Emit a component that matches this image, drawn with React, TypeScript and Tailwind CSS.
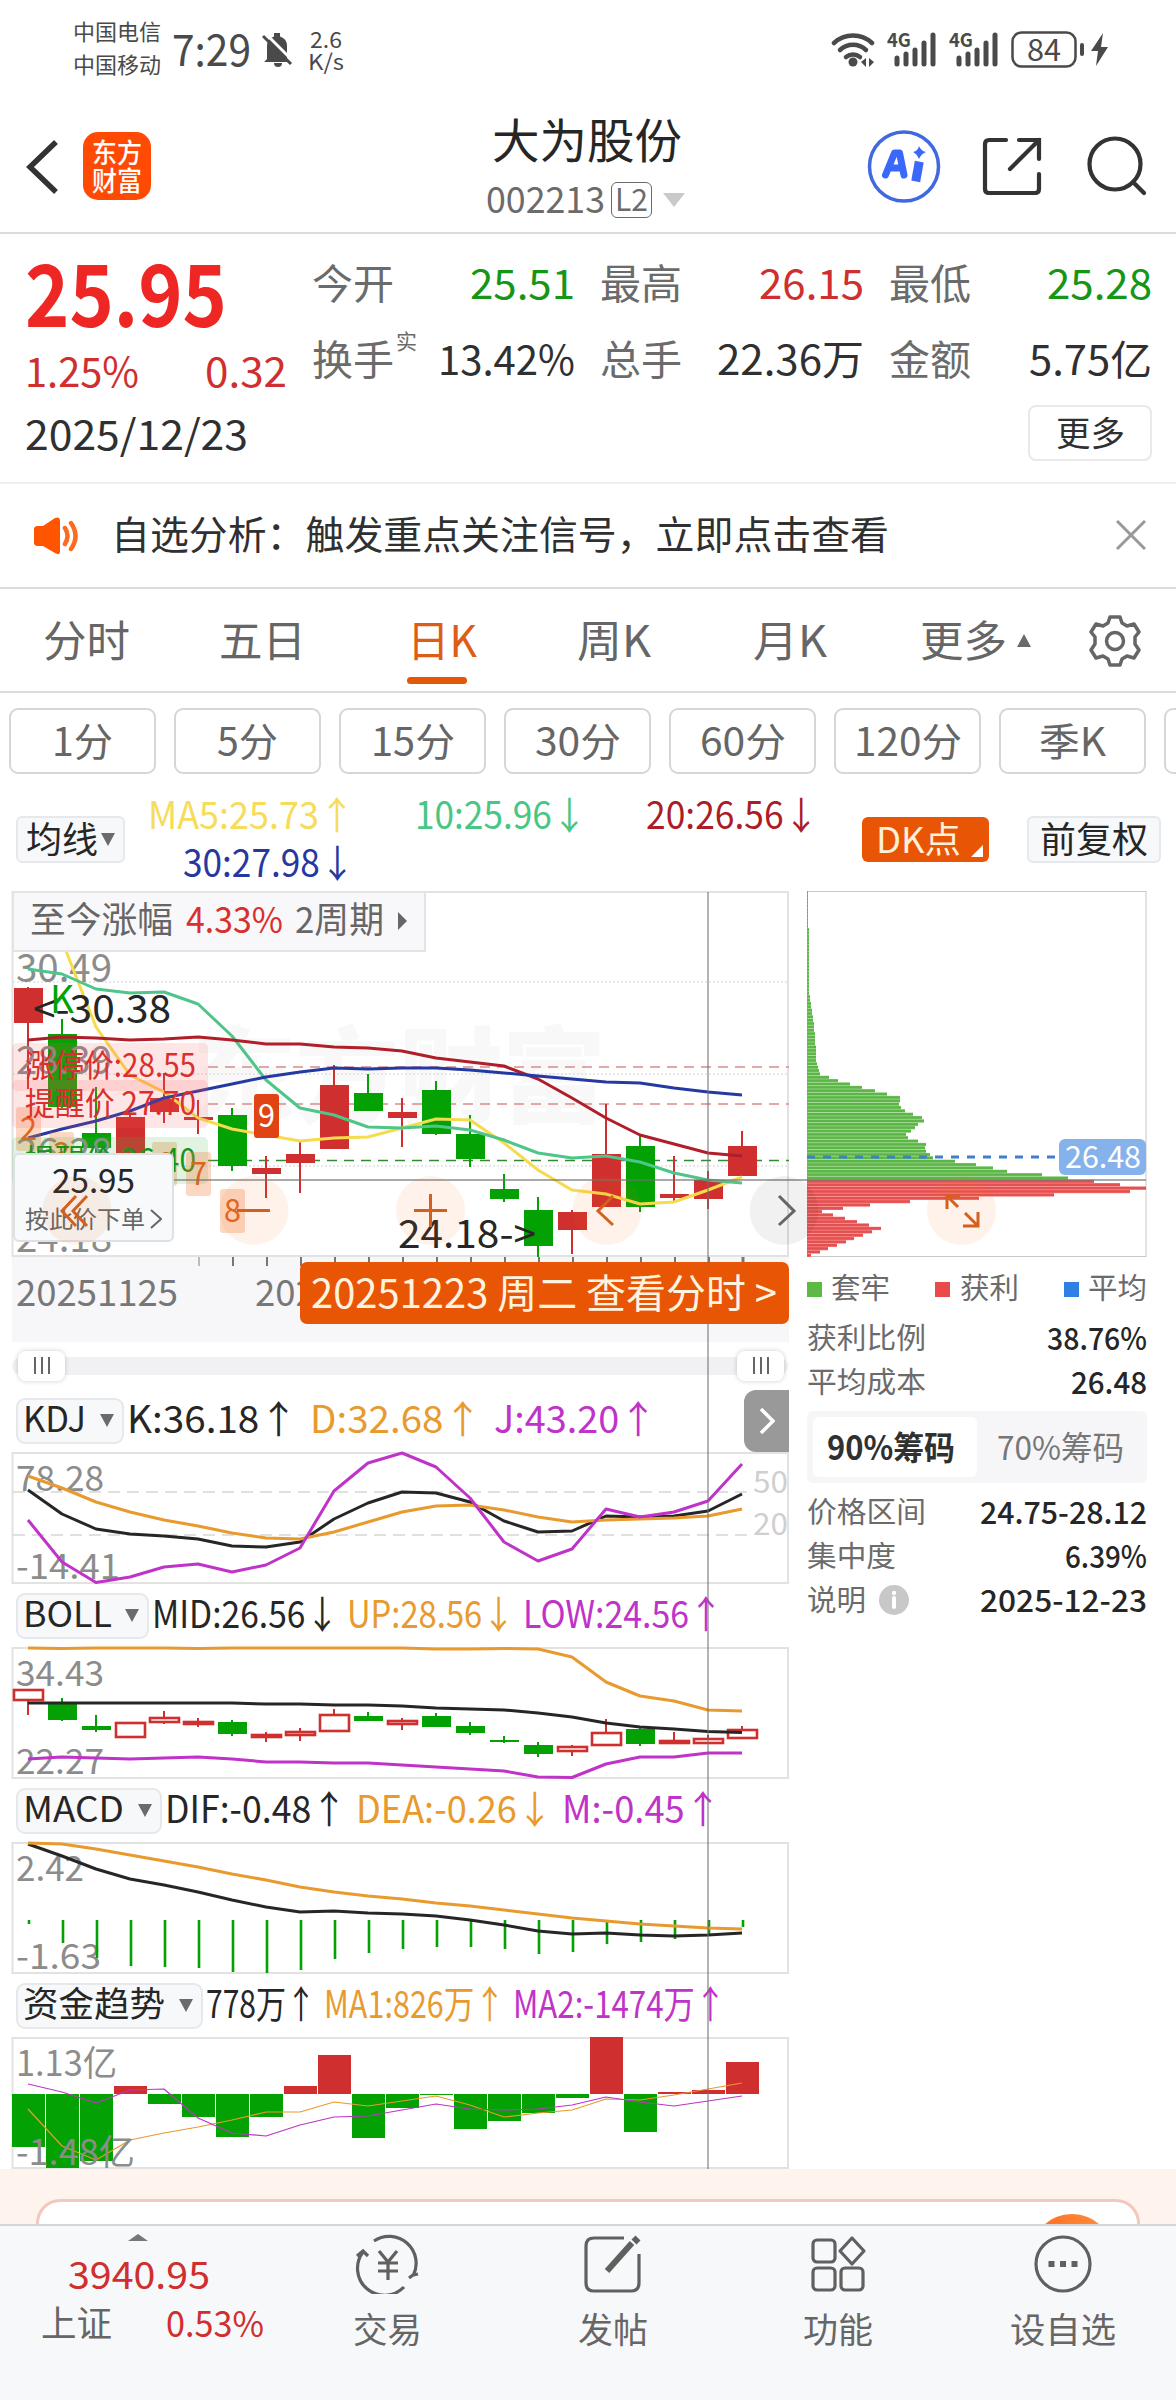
import { ReactNode } from 'react'

const RED = '#cf2f2e'
const GREEN = '#03a103'
const ORANGE = '#e89a2e'
const PURPLE = '#c033c8'
const BLACK = '#262626'

// every candle sits on a 34px pitch
const cx = (i: number) => 28 + 34 * i

const toPoints = (ys: number[], from = 0) => ys.map((y, i) => `${cx(i + from)},${y}`).join(' ')

// open/close/high/low already in chart pixels: [up, bodyTop, bodyBottom, wickTop, wickBottom]
type Candle = [number, number, number, number, number]

const candles: Candle[] = [
    [1, 97, 132, 96, 198], [0, 143, 216, 128, 217], [0, 242, 257, 196, 270], [1, 226, 266, 222, 268],
    [1, 207, 221, 182, 232], [1, 226, 229, 209, 243], [0, 224, 275, 217, 280], [1, 277, 283, 265, 307],
    [1, 263, 272, 251, 302], [1, 194, 258, 174, 258], [0, 202, 220, 183, 220], [1, 221, 227, 207, 256],
    [0, 199, 243, 190, 244], [0, 243, 268, 224, 276], [0, 298, 308, 283, 311], [0, 319, 355, 306, 366],
    [1, 321, 339, 319, 363], [1, 263, 316, 213, 316], [0, 255, 316, 245, 321], [1, 303, 307, 265, 310],
    [1, 289, 308, 280, 318], [1, 255, 285, 240, 285],
]

const ma10 = [78, 83, 98, 102, 101, 113, 145, 189, 217, 224, 236, 237, 235, 239, 249, 262, 267, 265, 271, 282, 289, 292]
const ma20 = [149, 146, 147, 149, 148, 146, 149, 153, 153, 156, 157, 160, 167, 171, 175, 188, 207, 227, 244, 253, 262, 265]
const ma30 = [247, 238, 230, 220, 207, 200, 193, 186, 181, 177, 178, 177, 177, 179, 182, 185, 188, 191, 192, 197, 201, 204]
const ma5 = [136, 184, 201, 227, 238, 244, 250, 247, 246, 237, 228, 229, 252, 279, 299, 303, 313, 311, 299, 286]

const kLine = [38, 62, 77, 82, 84, 87, 94, 95, 90, 67, 51, 40, 41, 50, 69, 80, 79, 64, 65, 64, 59, 42]
const dLine = [24, 36, 50, 60, 68, 74, 81, 86, 87, 80, 70, 60, 54, 53, 58, 65, 70, 68, 67, 66, 64, 57]
const jLine = [68, 110, 130.5, 125, 115, 112, 120, 113, 96, 39, 11, 1, 15, 46, 90, 109, 97, 57, 65, 60, 49, 12]

const bollUp = [1, 1.5, 1, 1, 1, 1.5, 1, 1, 1, 1, 1, 1, 2, 2, 1.5, 2, 10, 35, 49, 54, 63, 64]
const bollMid = [56, 56, 56, 56, 56, 56, 56, 57, 57, 58, 58, 59, 61, 62, 63, 66, 70, 76, 80, 82, 84.5, 85.5]
const bollLow = [112, 110, 111, 112, 111, 110, 112, 115, 115, 116, 116, 118, 120, 122, 124, 130, 130.5, 117, 110, 110, 106, 106]
const bollCandles: Candle[] = [
    [1, 42, 53, 42, 68], [0, 55, 73, 51, 74], [0, 79, 83, 68, 85], [1, 75, 90, 75, 90],
    [1, 70, 75, 64, 77], [1, 74, 77, 71, 80], [0, 75, 87, 73, 89], [1, 87, 90, 85, 95],
    [1, 84, 88, 81, 94], [1, 67, 84, 62, 84], [0, 69, 74, 65, 74], [1, 73, 77, 71, 83],
    [0, 69, 80, 66, 80], [0, 79, 86, 75, 88], [0, 93, 95, 89, 96], [0, 98, 107, 95, 110],
    [1, 99, 104, 98, 109], [1, 85, 98, 72, 98], [0, 82, 97, 80, 99], [1, 93, 96, 85, 96],
    [1, 91, 96, 88, 97], [1, 82, 91, 79, 91],
]

const dif = [2, 14, 27, 37, 43, 50, 58, 65, 70, 69, 71, 72, 74, 78, 83, 89, 92, 91, 93, 94, 93, 91]
const dea = [1, 2, 7, 13, 19, 25, 32, 38, 45, 50, 54, 57, 61, 64, 68, 72, 76, 79, 82, 84, 86, 87]
const macdBars = [82, 101, 116, 124, 125, 126, 130, 131, 128, 117, 111, 107, 105, 105, 107, 112, 110, 102, 100, 97, 93, 85]

const fundBars = [53, 74, 67, -8, 10, 23, 43, 23, -8, -39, 44, 14, 1, 35, 27, 19, 4, -57, 38, -2, -4, -32]
const fundMa1 = [72, 109, 123, 103, 96, 90, 83, 75, 75, 65, 69, 64, 59, 68, 80, 76, 73, 62, 63, 58, 52, 46]
const fundMa2 = [47, 55, 66, 53, 52, 81, 96, 99, 88, 80, 79, 73, 67, 72, 73, 72, 68, 60, 65, 69, 64, 59]

const lockedChips = [
    1, 1, 1, 1, 1, 1, 1, 1, 1, 1, 1, 2, 2, 2, 2, 2, 2, 2, 2, 2, 2, 2, 2, 2, 2, 2, 2, 2, 2, 2, 2,
    3, 3, 4, 4, 5, 5, 6, 6, 7, 7, 7, 8, 8, 8, 8, 9, 9, 9, 9, 9, 10, 11, 12, 13,
    22, 31, 43, 55, 68, 80, 93, 93, 92, 94, 98, 106, 115, 117, 111, 108, 104, 99, 101, 111, 119, 118, 119,
    123, 126, 148, 169, 186, 200, 235, 261,
]
const profitChips = [287, 313, 339, 323, 247, 172, 103, 63, 36, 15, 26, 38, 50, 62, 74, 65, 56, 47, 39, 30, 21, 13, 4]

function Candles({ data, hollow }: { data: Candle[]; hollow?: boolean }) {
    return (
        <g>
            {data.map(([up, top, bottom, high, low], i) => {
                const color = up ? RED : GREEN
                return (
                    <g key={i}>
                        <path d={`M${cx(i)} ${high}V${top}M${cx(i)} ${bottom}V${low}`} stroke={color} strokeWidth="2" />
                        {hollow && up
                            ? <rect x={cx(i) - 14} y={top + 1} width="29" height={Math.max(bottom - top - 1, 1)} fill="white" stroke={color} strokeWidth="2.6" />
                            : <rect x={cx(i) - 14} y={top} width="29" height={Math.max(bottom - top, 1)} fill={color} />}
                    </g>
                )
            })}
        </g>
    )
}

function Line({ ys, color, width = 3, from }: { ys: number[]; color: string; width?: number; from?: number }) {
    return <polyline points={toPoints(ys, from)} fill="none" stroke={color} strokeWidth={width} strokeLinejoin="round" />
}

function Label({ x, y, w, size = 37, color = '#8c8c8c', children }: { x: number; y: number; w: number; size?: number; color?: string; children: string }) {
    return <text x={x} y={y} fontSize={size} fill={color} textLength={w} lengthAdjust="spacingAndGlyphs">{children}</text>
}

// one-line run of text squeezed or stretched to a fixed width
function Fit({ w, size, color = 'currentColor', weight, className = '', children }: { w: number; size: number; color?: string; weight?: number; className?: string; children: string }) {
    return (
        <svg width={w} height={size} className={`shrink-0 overflow-visible ${className}`}>
            <text y={size * 0.87} fontSize={size} fill={color} fontWeight={weight} textLength={w} lengthAdjust="spacingAndGlyphs">{children}</text>
        </svg>
    )
}

function Caret({ up }: { up?: boolean }) {
    return (
        <svg width="14" height="13" viewBox="0 0 14 13" className="shrink-0">
            <path d={up ? 'M7 0L14 13H0Z' : 'M0 0H14L7 13Z'} fill="#6b6b6b" />
        </svg>
    )
}

function Signal() {
    return (
        <svg width="50" height="38" viewBox="0 0 50 38" className="overflow-visible">
            <text x="0" y="16" fontSize="19" fontWeight="700" textLength="24" lengthAdjust="spacingAndGlyphs" fill="#4a4a4a">4G</text>
            <path d="M10 27V33M19 23V33M28 19V33M37 12V33M46 4V33" stroke="#4a4a4a" strokeWidth="5" strokeLinecap="round" />
        </svg>
    )
}

function StatusBar() {
    return (
        <div className="flex h-[98px] justify-between pl-[73px] pr-[67px] text-[#4a4a4a]">
            <div className="flex">
                <div className="flex flex-col gap-[11px] pt-[21px]">
                    <Fit w={88} size={22}>中国电信</Fit>
                    <Fit w={88} size={22}>中国移动</Fit>
                </div>
                <Fit w={79} size={43} className="ml-[11px] mt-[29px]">7:29</Fit>
                <svg width="32" height="36" viewBox="0 0 32 36" className="ml-[11px] mt-[32px]">
                    <path d="M5 27V14a10 10 0 0 1 7-9.500V1h6v3.500a10 10 0 0 1 7 9.500V27l3 3H2Z" fill="#4a4a4a" />
                    <path d="M12 31h8a4 4 0 0 1-8 0Z" fill="#4a4a4a" />
                    <path d="M2 0L32 30" stroke="white" strokeWidth="3" />
                    <path d="M1 4L29 32" stroke="#4a4a4a" strokeWidth="3" />
                </svg>
                <div className="ml-[14px] flex flex-col items-center pt-[29px]">
                    <Fit w={32} size={22}>2.6</Fit>
                    <Fit w={36} size={22}>K/s</Fit>
                </div>
            </div>
            <div className="flex pt-[31px]">
                <svg width="46" height="38" viewBox="0 0 46 38" className="mr-[10px]">
                    <g fill="none" stroke="#4a4a4a" strokeWidth="4.500" strokeLinecap="round">
                        <path d="M3 12a28 28 0 0 1 38 0" />
                        <path d="M9 19a19 19 0 0 1 26 0" />
                        <path d="M15 26a11 11 0 0 1 14 0" />
                    </g>
                    <circle cx="22" cy="31" r="4.500" fill="#4a4a4a" />
                    <path d="M30 31L35 27V36ZM43 31L38 27V36Z" fill="#4a4a4a" />
                </svg>
                <div className="flex gap-[12px]">
                    <Signal />
                    <Signal />
                </div>
                <svg width="98" height="38" viewBox="0 0 98 38" className="ml-[12px] overflow-visible">
                    <rect x="1.500" y="1.500" width="63" height="34" rx="9" fill="none" stroke="#4a4a4a" strokeWidth="2.500" />
                    <text x="16" y="30" fontSize="31" textLength="34" lengthAdjust="spacingAndGlyphs" fill="#4a4a4a">84</text>
                    <path d="M71 14V23" stroke="#4a4a4a" strokeWidth="4" strokeLinecap="round" />
                    <path d="M92 2L80 20H87L85 35L97 16H90Z" fill="#4a4a4a" />
                </svg>
            </div>
        </div>
    )
}

function Header() {
    return (
        <header className="flex h-[136px] border-b-2 border-[#dcdcdc] pl-[26px] pr-[28px]">
            <div className="flex w-[462px]">
                <svg width="34" height="56" viewBox="0 0 34 56" className="mt-[41px]">
                    <path d="M30 3L4 28L30 53" fill="none" stroke="#333" strokeWidth="5.500" />
                </svg>
                <div className="ml-[23px] mt-[34px] flex h-[68px] w-[68px] flex-col items-center justify-center gap-px rounded-[15px] bg-[#ff4a05] text-white">
                    <Fit w={50} size={27} weight={500}>东方</Fit>
                    <Fit w={50} size={27} weight={500}>财富</Fit>
                </div>
            </div>
            <div className="flex w-[200px] flex-col pt-[19px] text-[#262626]">
                <Fit w={190} size={47} className="ml-[4px]">大为股份</Fit>
                <div className="-ml-[2px] mt-[17px] flex items-center text-[#6b6b6b]">
                    <Fit w={119} size={37}>002213</Fit>
                    <span className="ml-[6px] flex h-[36px] w-[41px] items-center justify-center rounded-md border-[1.5px] border-[#6b6b6b]"><Fit w={33} size={31}>L2</Fit></span>
                    <svg width="22" height="14" viewBox="0 0 22 14" className="ml-[11px]"><path d="M0 0H22L11 14Z" fill="#c9c9c9" /></svg>
                </div>
            </div>
            <div className="ml-auto flex">
                <svg width="74" height="74" viewBox="0 0 74 74" className="mt-[31px]">
                    <circle cx="37" cy="37.500" r="34.500" fill="none" stroke="#4068e0" strokeWidth="3.500" />
                    <g fill="none" stroke="#3a68fb" strokeLinejoin="round" strokeLinecap="round">
                        <path d="M18.500 46L27.500 24H32.500L37 46M25 39H35" strokeWidth="7" />
                        <path d="M51.500 37L49.500 48" strokeWidth="9" strokeLinecap="square" />
                    </g>
                    <path d="M52 17Q54 22 59 23Q54 25 52 30Q50 25 46 23Q51 22 52 17Z" fill="#3a68fb" />
                </svg>
                <svg width="60" height="60" viewBox="0 0 60 60" className="ml-[41px] mt-[39px]">
                    <path d="M24 3H7Q3 3 3 7V52Q3 56 7 56H53Q57 56 57 52V37M28 32L57 3M37 3H57V22" fill="none" stroke="#333" strokeWidth="4.200" strokeLinecap="round" />
                </svg>
                <svg width="62" height="62" viewBox="0 0 62 62" className="ml-[44px] mt-[37px]">
                    <circle cx="29" cy="29" r="25.500" fill="none" stroke="#333" strokeWidth="4.200" />
                    <path d="M47 47L58 58" stroke="#333" strokeWidth="4.200" strokeLinecap="round" />
                </svg>
            </div>
        </header>
    )
}

function Stat({ label, sup, value, w, color = '#303030' }: { label: string; sup?: string; value: string; w: number; color?: string }) {
    return (
        <div className="flex items-center justify-between text-[#6b6b6b]">
            <div className="flex">
                <Fit w={82} size={41}>{label}</Fit>
                {sup && <Fit w={21} size={21} className="-mt-[8px] ml-[2px]">{sup}</Fit>}
            </div>
            <Fit w={w} size={41} color={color}>{value}</Fit>
        </div>
    )
}

function Quote() {
    return (
        <section className="h-[250px] border-b-2 border-[#eee] pl-[25px] pr-[24px]">
            <div className="flex h-[166px]">
                <div className="w-[262px] pt-[18px]">
                    <Fit w={202} size={86} color="#ee2624" weight={700}>25.95</Fit>
                    <div className="mt-[13px] flex justify-between">
                        <Fit w={114} size={41} color={RED}>1.25%</Fit>
                        <Fit w={82} size={41} color={RED}>0.32</Fit>
                    </div>
                </div>
                <div className="ml-[25px] grid grow grid-cols-3 grid-rows-[41px_41px] gap-x-[25px] gap-y-[35px] pt-[29px]">
                    <Stat label="今开" value="25.51" w={105} color="#169616" />
                    <Stat label="最高" value="26.15" w={105} color={RED} />
                    <Stat label="最低" value="25.28" w={105} color="#169616" />
                    <Stat label="换手" sup="实" value="13.42%" w={137} />
                    <Stat label="总手" value="22.36万" w={147} />
                    <Stat label="金额" value="5.75亿" w={123} />
                </div>
            </div>
            <div className="flex items-start justify-between text-[#303030]">
                <Fit w={223} size={41} className="mt-[14px]">2025/12/23</Fit>
                <button className="mt-[5px] flex h-[56px] w-[124px] items-center justify-center rounded-lg border-2 border-[#e9e9e9]"><Fit w={69} size={34}>更多</Fit></button>
            </div>
        </section>
    )
}

function Notice() {
    return (
        <section className="flex h-[105px] items-center border-b-2 border-[#dcdcdc] pl-[33px] pr-[30px] text-[#303030]">
            <svg width="46" height="38" viewBox="0 0 46 38">
                <path d="M1 12Q1 9 5 9H10L22 1Q27 -1 27 4V34Q27 39 22 36L10 29H5Q1 29 1 26Z" fill="#ff5500" />
                <path d="M32 11Q37 19 32 27M38 6Q47 19 38 32" fill="none" stroke="#ff6a20" strokeWidth="4.500" strokeLinecap="round" />
            </svg>
            <Fit w={778} size={39} className="-mt-[3px] ml-[32px]">自选分析：触发重点关注信号，立即点击查看</Fit>
            <svg width="30" height="30" viewBox="0 0 30 30" className="-mt-[2px] ml-auto"><path d="M1 1L29 29M29 1L1 29" stroke="#999" strokeWidth="3" /></svg>
        </section>
    )
}

function Tabs() {
    return (
        <nav className="flex h-[104px] border-b-2 border-[#dcdcdc] pl-[43px] pr-[35px] pt-[31px] text-[#666]">
            <Fit w={87} size={43}>分时</Fit>
            <Fit w={87} size={43} className="ml-[89px]">五日</Fit>
            <div className="ml-[101px] text-[#dd5c16]">
                <Fit w={70} size={43}>日K</Fit>
                <div className="mt-[14px] h-[7px] w-[60px] rounded-full bg-[#e45608]" />
            </div>
            <Fit w={74} size={43} className="ml-[100px]">周K</Fit>
            <Fit w={74} size={43} className="ml-[102px]">月K</Fit>
            <Fit w={87} size={43} className="ml-[93px]">更多</Fit>
            <div className="ml-[10px] mt-[14px]"><Caret up /></div>
            <svg width="52" height="52" viewBox="0 0 52 52" className="-mt-[5px] ml-auto">
                <path d="M21 2H31L33 8L38 11L45 9L50 17L46 22V29L50 35L45 43L38 41L33 44L31 50H21L19 44L14 41L7 43L2 35L6 29V22L2 17L7 9L14 11L19 8Z" fill="none" stroke="#666" strokeWidth="3.500" strokeLinejoin="round" />
                <circle cx="26" cy="26" r="8.500" fill="none" stroke="#666" strokeWidth="3.500" />
            </svg>
        </nav>
    )
}

function Periods() {
    const periods: [string, number][] = [['1分', 61], ['5分', 61], ['15分', 84], ['30分', 86], ['60分', 86], ['120分', 108], ['季K', 67]]
    return (
        <div className="flex gap-[18px] overflow-hidden pl-[9px] pt-[15px] text-[#666]">
            {periods.map(([name, w]) => (
                <button key={name} className="flex h-[66px] w-[147px] shrink-0 items-center justify-center rounded-[9px] border-2 border-[#d6d6d6]">
                    <Fit w={w} size={39}>{name}</Fit>
                </button>
            ))}
            <div className="h-[66px] w-[147px] shrink-0 rounded-[9px] border-2 border-[#d6d6d6]" />
        </div>
    )
}

function Averages() {
    return (
        <div className="flex h-[117px] pl-[16px]">
            <div className="mt-[42px] flex h-[47px] w-[109px] items-center gap-[3px] rounded-md border-2 border-[#e6e8eb] bg-[#f7f8fa] pl-[8px] text-[#262626]">
                <Fit w={72} size={36}>均线</Fit>
                <Caret />
            </div>
            <div className="-ml-[2px] grid w-[696px] grid-cols-3 grid-rows-[38px_38px] justify-items-end gap-y-[10px] pt-[22px]">
                <Fit w={207} size={38} color="#f6dc5a">MA5:25.73↑</Fit>
                <Fit w={172} size={38} color="#48c685">10:25.96↓</Fit>
                <Fit w={173} size={38} color="#ab1c27">20:26.56↓</Fit>
                <Fit w={172} size={38} color="#26389f">30:27.98↓</Fit>
            </div>
            <div className="relative ml-[43px] mt-[43px] flex h-[45px] w-[127px] items-center rounded-md bg-[#e85505] pl-[14px] text-[#fff0da]">
                <Fit w={85} size={36}>DK点</Fit>
                <svg width="12" height="12" className="absolute bottom-[5px] right-[6px]"><path d="M12 0V12H0Z" fill="white" /></svg>
            </div>
            <div className="ml-[38px] mt-[42px] flex h-[47px] w-[134px] items-center justify-center rounded-md border-2 border-[#e6e8eb] bg-[#f7f8fa] text-[#262626]">
                <Fit w={108} size={36}>前复权</Fit>
            </div>
        </div>
    )
}

function Badge({ x, y, text, solid }: { x: number; y: number; text: string; solid?: boolean }) {
    return (
        <g>
            <rect x={x} y={y} width="25" height="44" rx="3" fill={solid ? '#e04314' : '#f47a35'} fillOpacity={solid ? 1 : 0.3} />
            <text x={x + 4} y={y + 33} fontSize="32" textLength="17" lengthAdjust="spacingAndGlyphs" fill={solid ? '#fff' : '#e0641e'}>{text}</text>
        </g>
    )
}

function MainChart() {
    return (
        <svg width="800" height="366" viewBox="0 0 800 366" className="block overflow-visible">
            <rect x="12.500" y="1" width="775.500" height="364" fill="white" stroke="#e2e2e2" strokeWidth="2" />
            <g fontWeight="900" fill="#f8f8f9">
                <text x="192" y="224" fontSize="104" textLength="414">东方财富</text>
            </g>
            <path d="M13 91H788M13 183H788M13 275H788" stroke="#d5d5d5" strokeDasharray="2 2" />
            <path d="M208 176H789M208 213H789" stroke="#d98c8c" strokeWidth="1.600" strokeDasharray="10 7" />
            <path d="M208 269.500H789" stroke="#338a33" strokeWidth="1.600" strokeDasharray="10 7" />
            <Label x={16} y={91} w={96} size={39}>30.49</Label>
            <Candles data={candles} />
            <polyline points={`66,60 ${toPoints(ma5, 2)}`} fill="none" stroke="#f5dc4e" strokeWidth="3" />
            <Line ys={ma10} color="#4fc589" />
            <Line ys={ma20} color="#b01f29" />
            <Line ys={ma30} color="#2439a2" />
            <Label x={16} y={183} w={96} size={39}>28.39</Label>
            <Label x={16} y={275} w={96} size={39}>26.28</Label>
            <Label x={16} y={361} w={96} size={39}>24.18</Label>
            <Label x={50} y={122} w={24} size={38} color={GREEN}>K</Label>
            <Label x={33} y={132} w={138} size={39} color={BLACK}>&lt;-30.38</Label>
            <Badge x={16} y={216} text="2" />
            <Badge x={49} y={241} text="3" />
            <Badge x={152} y={251} text="6" />
            <rect x="12" y="152" width="196" height="48" rx="5" fill="#ff5a5a" fillOpacity="0.150" />
            <rect x="12" y="189" width="196" height="48" rx="5" fill="#ff5a5a" fillOpacity="0.150" />
            <rect x="12" y="246" width="196" height="47" rx="5" fill="#4fb84f" fillOpacity="0.170" />
            <Label x={25} y={186} w={171} size={32} color="#d9302e">涨停价:28.55</Label>
            <Label x={25} y={224} w={171} size={32} color="#d9302e">提醒价 27.70</Label>
            <Label x={25} y={281} w={171} size={32} color="#18941a">提醒价 26.40</Label>
            <Badge x={186} y={261} text="7" />
            <Badge x={220} y={298} text="8" />
            <Badge x={254} y={203} text="9" solid />
            <Label x={398} y={357} w={138} size={39} color={BLACK}>24.18-&gt;</Label>
        </svg>
    )
}

function Stage() {
    return (
        <div className="relative">
            <MainChart />
            <div className="absolute left-[12px] top-0 flex h-[61px] w-[414px] items-center border-2 border-[#e2e4e8] bg-[#f8f8fa] pb-[4px] pl-[16px] text-[#666]">
                <Fit w={143} size={36}>至今涨幅</Fit>
                <Fit w={97} size={36} color="#d9302e" className="ml-[13px]">4.33%</Fit>
                <Fit w={89} size={36} className="ml-[12px]">2周期</Fit>
                <svg width="9" height="18" viewBox="0 0 9 18" className="ml-[14px] mt-[3px]"><path d="M0 0L9 9L0 18Z" fill="#666" /></svg>
            </div>
            <div className="absolute left-[13px] top-[262px] flex h-[89px] w-[161px] flex-col rounded-md border-2 border-[#dde0e4] bg-[#f7f9fb] pt-[8px]">
                <Fit w={83} size={34} color={BLACK} className="ml-[37px]">25.95</Fit>
                <div className="ml-[10px] mt-[10px] flex items-center gap-[5px] text-[#666]">
                    <Fit w={120} size={24}>按此价下单</Fit>
                    <svg width="12" height="20" viewBox="0 0 12 20"><path d="M1 1L11 10L1 19" fill="none" stroke="#666" strokeWidth="2" /></svg>
                </div>
            </div>
        </div>
    )
}

function DateAxis() {
    return (
        <div className="relative ml-[12px] h-[85px] w-[777px] overflow-hidden bg-[#f7f7fa]">
            <svg width="777" height="84" className="block">
                {Array.from({ length: 17 }, (_, i) => <path key={i} d={`M${187 + 34 * i} 0V9`} stroke={i ? '#777' : '#bbb'} strokeWidth={i === 16 ? 3 : 2} />)}
                <Label x={4} y={49} w={162} size={37} color="#777">20251125</Label>
                <Label x={243} y={49} w={162} size={37} color="#777">20251209</Label>
            </svg>
            <div className="absolute right-0 top-[5px] flex h-[62px] w-[489px] items-center rounded-[7px] bg-[#e85505] pl-[11px] text-[#fff3df]">
                <Fit w={466} size={40}>20251223 周二 查看分时 &gt;</Fit>
            </div>
        </div>
    )
}

function Handle() {
    return (
        <div className="flex h-[30px] w-[47px] items-center justify-center gap-[5px] rounded-lg bg-white shadow-[0_0_5px_rgba(0,0,0,0.2)]">
            <i className="h-[17px] w-[2px] bg-[#666]" />
            <i className="h-[17px] w-[2px] bg-[#666]" />
            <i className="h-[17px] w-[2px] bg-[#666]" />
        </div>
    )
}

type Reading = [string, number, string]

function Indicator({ name, nameWidth, boxWidth, readings, gap, tab, children }: { name: string; nameWidth: number; boxWidth: string; readings: Reading[]; gap: string; tab?: boolean; children: ReactNode }) {
    return (
        <section>
            <div className="flex h-[63px] items-center pl-[16px]">
                <div className={`flex h-[46px] items-center justify-between rounded-[9px] border-2 border-[#e6e8eb] bg-[#f7f8fa] pl-[5px] pr-[8px] text-[#262626] ${boxWidth}`}>
                    <Fit w={nameWidth} size={35} className="-mt-[3px]">{name}</Fit>
                    <Caret />
                </div>
                <div className={`-mt-[4px] ml-[3px] flex ${gap}`}>
                    {readings.map(([text, w, color]) => <Fit key={text} w={w} size={38} color={color}>{text}</Fit>)}
                </div>
                {tab && (
                    <div className="ml-auto mr-[11px] flex h-[62px] w-[45px] items-center justify-center rounded-l-xl bg-[#999]">
                        <svg width="16" height="28" viewBox="0 0 16 28"><path d="M2 2L14 14L2 26" fill="none" stroke="white" strokeWidth="3.500" /></svg>
                    </div>
                )}
            </div>
            <svg width="800" height="132" viewBox="0 0 800 132" className="block overflow-visible">
                <rect x="12.500" y="1" width="775.500" height="130" fill="none" stroke="#e2e2e2" strokeWidth="2" />
                {children}
            </svg>
        </section>
    )
}

function Indicators() {
    return (
        <>
            <Indicator name="KDJ" nameWidth={63} boxWidth="w-[108px]" gap="gap-[12px]" tab
                readings={[['K:36.18↑', 171, BLACK], ['D:32.68↑', 172, ORANGE], ['J:43.20↑', 163, PURPLE]]}>
                <path d="M13 40H752M13 83H752" stroke="#d6d6d6" strokeWidth="1.500" strokeDasharray="12 7" />
                <Label x={753} y={41} w={35} size={30} color="#cfcfcf">50</Label>
                <Label x={753} y={83} w={35} size={30} color="#cfcfcf">20</Label>
                <Label x={16} y={39} w={88} size={35}>78.28</Label>
                <Label x={16} y={127} w={104} size={35}>-14.41</Label>
                <Line ys={kLine} color={BLACK} />
                <Line ys={dLine} color={ORANGE} />
                <Line ys={jLine} color={PURPLE} />
            </Indicator>
            <Indicator name="BOLL" nameWidth={89} boxWidth="w-[133px]" gap="gap-[8px]"
                readings={[['MID:26.56↓', 187, BLACK], ['UP:28.56↓', 168, ORANGE], ['LOW:24.56↑', 200, PURPLE]]}>
                <Label x={16} y={39} w={88} size={35}>34.43</Label>
                <Label x={16} y={127} w={88} size={35}>22.27</Label>
                <Candles data={bollCandles} hollow />
                <Line ys={bollUp} color={ORANGE} />
                <Line ys={bollMid} color={BLACK} />
                <Line ys={bollLow} color={PURPLE} />
            </Indicator>
            <Indicator name="MACD" nameWidth={101} boxWidth="w-[146px]" gap="gap-[9px]"
                readings={[['DIF:-0.48↑', 182, BLACK], ['DEA:-0.26↓', 197, ORANGE], ['M:-0.45↑', 159, PURPLE]]}>
                <Label x={16} y={39} w={68} size={35}>2.42</Label>
                <Label x={16} y={127} w={85} size={35}>-1.63</Label>
                {macdBars.map((y, i) => <path key={i} d={`M${cx(i) + 1} 78V${y}`} stroke={GREEN} strokeWidth="2.600" />)}
                <Line ys={dif} color={BLACK} />
                <Line ys={dea} color={ORANGE} />
            </Indicator>
            <Indicator name="资金趋势" nameWidth={142} boxWidth="w-[187px]" gap="gap-[8px]"
                readings={[['778万↑', 110, BLACK], ['MA1:826万↑', 181, ORANGE], ['MA2:-1474万↑', 213, PURPLE]]}>
                {fundBars.map((v, i) => <rect key={i} x={12 + 34 * i} y={v < 0 ? 57 + v : 57} width="33" height={Math.abs(v)} fill={v < 0 ? RED : GREEN} />)}
                <Line ys={fundMa1} color={ORANGE} width={1.2} />
                <Line ys={fundMa2} color={PURPLE} width={1.2} />
                <Label x={16} y={39} w={101} size={35}>1.13亿</Label>
                <Label x={16} y={128} w={119} size={35}>-1.48亿</Label>
            </Indicator>
        </>
    )
}

function ChipRow({ label, value, w, lw, info }: { label: string; value: string; w: number; lw: number; info?: boolean }) {
    return (
        <div className="flex h-[44px] items-center">
            <Fit w={lw} size={29} color="#6b6b6b">{label}</Fit>
            {info && (
                <svg width="30" height="30" viewBox="0 0 30 30" className="ml-[13px]">
                    <circle cx="15" cy="15" r="15" fill="#c8c8c8" />
                    <path d="M15 13V22" stroke="white" strokeWidth="4" strokeLinecap="round" />
                    <circle cx="15" cy="8" r="2.200" fill="white" />
                </svg>
            )}
            <Fit w={w} size={31} weight={500} color="#262626" className="ml-auto">{value}</Fit>
        </div>
    )
}

function Chips() {
    const step = 366 / (lockedChips.length + profitChips.length)
    return (
        <aside className="w-[340px]">
            <svg width="340" height="366" viewBox="0 0 340 366" className="block">
                <rect x="0.500" y="0.500" width="338.500" height="365" fill="white" stroke="#c8c8c8" />
                <rect x="0" y="0" width="1" height="290" fill="#5fb84a" />
                {[...lockedChips, ...profitChips].map((w, i) => {
                    const locked = i < lockedChips.length
                    return (
                        <g key={i}>
                            <rect x="0" y={i * step} width={w} height={step} fill={locked ? '#8fd07e' : '#ff7070'} />
                            <rect x="0" y={i * step + 0.4} width={w} height={step - 1} fill={locked ? '#5cb547' : '#e05252'} />
                        </g>
                    )
                })}
                <path d="M0 266H248" stroke="#3f7fd0" strokeWidth="3" strokeDasharray="8 8" />
                <rect x="252" y="248" width="87" height="36" rx="6" fill="#86b2ec" />
                <Label x={258} y={277} w={76} size={31} color="#fff">26.48</Label>
            </svg>
            <div className="flex h-[59px] items-center justify-between pt-[3px] text-[#6b6b6b]">
                <div className="flex items-center gap-[9px]"><i className="mt-[2px] h-[15px] w-[15px] bg-[#5cb944]" /><Fit w={59} size={29}>套牢</Fit></div>
                <div className="flex items-center gap-[10px]"><i className="mt-[2px] h-[15px] w-[15px] bg-[#e94b4b]" /><Fit w={59} size={29}>获利</Fit></div>
                <div className="flex items-center gap-[9px]"><i className="mt-[2px] h-[15px] w-[15px] bg-[#3080e4]" /><Fit w={59} size={29}>平均</Fit></div>
            </div>
            <ChipRow label="获利比例" lw={119} value="38.76%" w={100} />
            <ChipRow label="平均成本" lw={119} value="26.48" w={76} />
            <div className="mb-[7px] mt-[7px] flex h-[72px] items-center rounded-md bg-[#f6f6f9] pl-[6px]">
                <div className="flex h-[60px] w-[164px] items-center rounded-md bg-white pl-[14px]"><Fit w={128} size={33} weight={700} color="#303030">90%筹码</Fit></div>
                <Fit w={127} size={33} color="#777" className="ml-[20px]">70%筹码</Fit>
            </div>
            <ChipRow label="价格区间" lw={119} value="24.75-28.12" w={167} />
            <ChipRow label="集中度" lw={89} value="6.39%" w={82} />
            <ChipRow label="说明" lw={59} value="2025-12-23" w={167} info />
        </aside>
    )
}

// crosshair and floating round controls drawn over both panels
function Overlay() {
    return (
        <svg width="1176" height="1278" viewBox="0 0 1176 1278" className="pointer-events-none absolute left-0 top-0">
            <path d="M708 1V372M708 433V1278" stroke="#6e6e6e" strokeOpacity="0.650" strokeWidth="1.600" />
            <path d="M174 289H1146" stroke="#707070" strokeOpacity="0.600" strokeWidth="2" />
            <g fill="#f26a1b" fillOpacity="0.090">
                <circle cx="77" cy="319.500" r="34.500" />
                <circle cx="254" cy="319.500" r="34.500" />
                <circle cx="430.500" cy="319.500" r="34.500" />
                <circle cx="607" cy="319.500" r="34.500" />
                <circle cx="961.500" cy="319.500" r="34.500" />
            </g>
            <circle cx="784" cy="319.500" r="34.500" fill="#000" fillOpacity="0.055" />
            <g fill="none" stroke="#d4601e" strokeWidth="3">
                <path d="M76 305L62 320L76 335M87 305L73 320L87 335" />
                <path d="M237 319.500H270" />
                <path d="M414 319.500H447M430.500 303V336" />
                <path d="M613 305L598 320L613 334" />
                <path d="M947 318V305H960M947 305L958 316M978 321V335H963M978 335L965 322" />
            </g>
            <path d="M779 305L794 320L779 334" fill="none" stroke="#666" strokeWidth="3" />
        </svg>
    )
}

function NavItem({ label, w, children }: { label: string; w: number; children: ReactNode }) {
    return (
        <div className="flex w-[225px] flex-col items-center">
            <svg width="66" height="60" viewBox="0 0 66 60" className="mt-[8px]" fill="none" stroke="#606060" strokeWidth="3.200">{children}</svg>
            <Fit w={w} size={35} color="#666" className="mt-[19px]">{label}</Fit>
        </div>
    )
}

function BottomBar() {
    return (
        <footer className="flex h-[176px] border-t-2 border-[#d4d6da] bg-[#f7f8fa]">
            <div className="flex w-[275px] flex-col items-center pt-[8px]">
                <svg width="20" height="7" viewBox="0 0 20 7"><path d="M10 0L20 7H0Z" fill="#777" /></svg>
                <Fit w={142} size={38} color={RED} className="ml-[2px] mt-[15px]">3940.95</Fit>
                <div className="ml-[29px] mt-[12px] flex w-[223px] justify-between">
                    <Fit w={71} size={36} color="#666">上证</Fit>
                    <Fit w={98} size={36} color={RED}>0.53%</Fit>
                </div>
            </div>
            <NavItem label="交易" w={69}>
                <path d="M19 7A27 27 0 0 1 58 42M49 53A27 27 0 0 1 8 18M2 22L8 17L13 22M54 44L58 41L63 40" />
                <path d="M24 17L33 28L42 17M33 28V46M23 29H43M23 37H43" />
            </NavItem>
            <NavItem label="发帖" w={70}>
                <path d="M44 4H14Q6 4 6 12V49Q6 57 14 57H51Q59 57 59 49V20" />
                <path d="M27 37L52 9" strokeWidth="6" />
                <path d="M54 8L58 4" strokeWidth="7" />
            </NavItem>
            <NavItem label="功能" w={70}>
                <rect x="8" y="6" width="22" height="22" rx="4" />
                <rect x="8" y="34" width="22" height="22" rx="4" />
                <rect x="36" y="34" width="22" height="22" rx="4" />
                <path d="M47 4L59 17L47 30L35 17Z" strokeLinejoin="round" />
            </NavItem>
            <NavItem label="设自选" w={106}>
                <circle cx="33" cy="30" r="27" />
                <path d="M18.500 30H24.500M30 30H36M41.500 30H47.500" strokeWidth="6" />
            </NavItem>
        </footer>
    )
}

export default function App() {
    return (
        <div className="h-[2400px] w-[1176px] overflow-hidden bg-white font-['Noto_Sans_CJK_SC',sans-serif] leading-none">
            <StatusBar />
            <Header />
            <Quote />
            <Notice />
            <Tabs />
            <Periods />
            <Averages />
            <main className="relative flex h-[1278px]">
                <div className="w-[800px]">
                    <Stage />
                    <DateAxis />
                    <div className="flex h-[47px] items-center pl-[12px]">
                        <div className="flex h-[18px] w-[776px] items-center justify-between rounded-full bg-[#f1f1f4] pl-[6px] pr-[4px]">
                            <Handle />
                            <Handle />
                        </div>
                    </div>
                    <Indicators />
                </div>
                <div className="ml-[7px]"><Chips /></div>
                <Overlay />
            </main>
            <div className="h-[55px] overflow-hidden bg-[#fff3ee] px-[36px] pt-[30px]">
                <div className="flex h-[60px] justify-end rounded-t-[24px] border-[3px] border-b-0 border-[#f3c8bd] bg-white pr-[24px] pt-[12px]">
                    <div className="h-[82px] w-[82px] shrink-0 rounded-full bg-linear-to-r from-[#ff6a1c] to-[#ff9140]" />
                </div>
            </div>
            <BottomBar />
        </div>
    )
}
